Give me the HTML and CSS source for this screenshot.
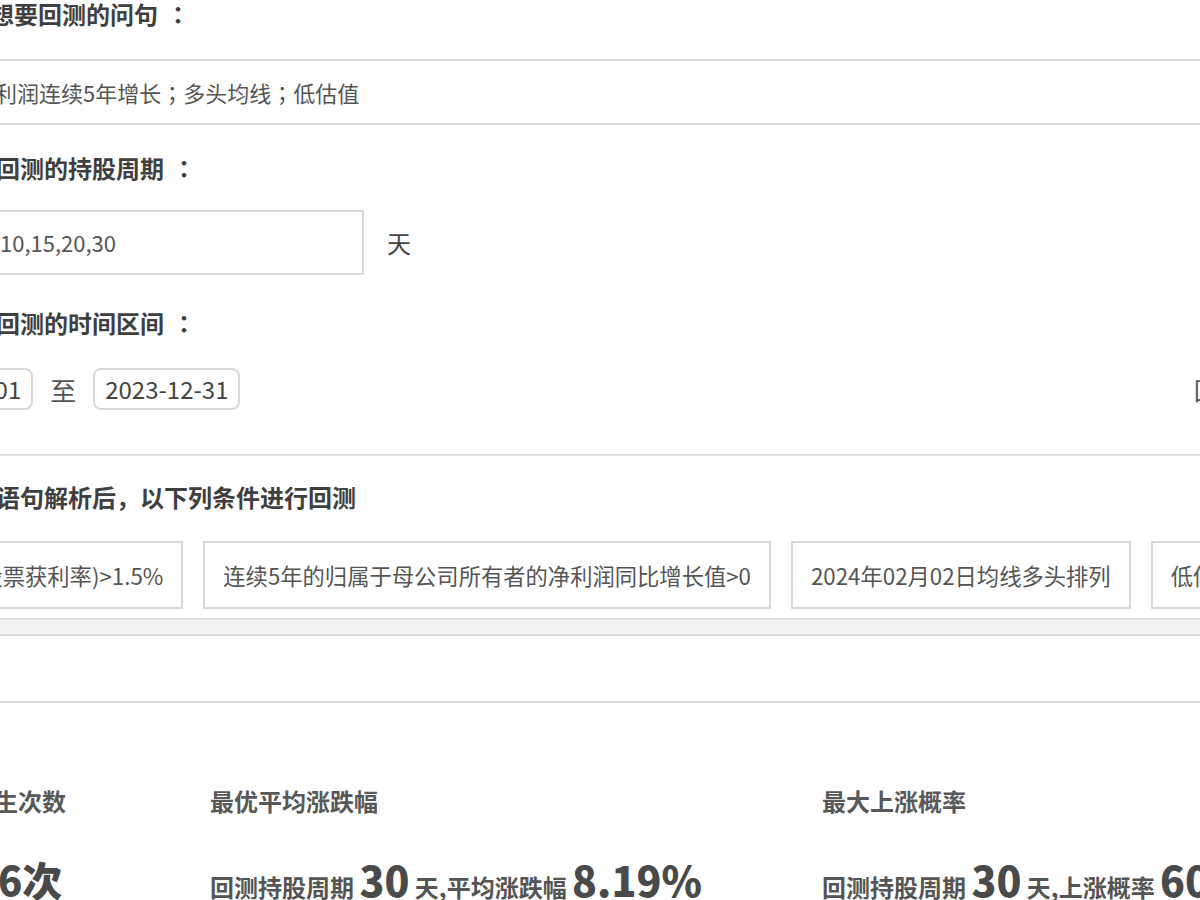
FILE: index.html
```html
<!DOCTYPE html>
<html>
	<head>
		<meta charset="UTF-8">
		<title>策略回测</title>
		<link rel="stylesheet" href="styles.css">
	</head>
	<body>
        <div class="page">
            <!-- 问句 -->
            <div class="title">输入想要回测的问句<span class="colon">：</span></div>
            <div class="query-box">净利润连续5年增长<span class="punct">；</span>多头均线<span class="punct">；</span>低估值</div>

            <!-- 持股周期 -->
            <div class="title">设置回测的持股周期<span class="colon">：</span></div>
            <div class="period-row">
                <div class="period-box">10,15,20,30</div>
                <span class="unit">天</span>
            </div>

            <!-- 时间区间 -->
            <div class="title">设置回测的时间区间<span class="colon">：</span></div>
            <div class="date-row">
                <span class="date-box">2019-01-01</span>
                <span class="date-sep">至</span>
                <span class="date-box">2023-12-31</span>
                <span class="run-btn">回测</span>
            </div>

            <div class="divider"></div>

            <!-- 解析后的条件 -->
            <div class="title">经过语句解析后<span class="punct">，</span>以下列条件进行回测</div>
            <div class="cond-wrap">
                <div class="cond-row">
                    <div class="cond">股息率(股票获利率)&gt;1.5%</div>
                    <div class="cond">连续5年的归属于母公司所有者的净利润同比增长值&gt;0</div>
                    <div class="cond">2024年02月02日均线多头排列</div>
                    <div class="cond">低估值</div>
                </div>
            </div>
            <div class="scroll-track"></div>

            <div class="divider low"></div>

            <!-- 回测结果 -->
            <div class="stats">
                <div class="stat first">
                    <div class="stat-label">发生次数</div>
                    <div class="stat-value"><b class="big">6次</b></div>
                </div>
                <div class="stat second">
                    <div class="stat-label">最优平均涨跌幅</div>
                    <div class="stat-value">回测持股周期 <b class="big">30</b> 天,平均涨跌幅 <b class="big">8.19%</b></div>
                </div>
                <div class="stat">
                    <div class="stat-label">最大上涨概率</div>
                    <div class="stat-value">回测持股周期 <b class="big">30</b> 天,上涨概率 <b class="big">60%</b></div>
                </div>
            </div>
        </div>
	</body>
</html>
```

FILE: styles.css
```css
*{
    margin: 0;
    padding: 0;
    box-sizing: border-box;
}
html,body{
    overflow: hidden;
    background: #fff;
}
body{
    font-family: "Noto Sans CJK SC", "Microsoft YaHei", sans-serif;
    color: #555;
    width: 1200px;
    height: 900px;
}
.page{
    width: 1290px;
    margin-left: -52px;
}
.title{
    font-size: 24px;
    line-height: 28px;
    font-weight: bold;
    color: #3f3f3f;
    margin-left: -6px; /* 第一行的前缀多小半个字 */
}
/* 全角标点居中，像雅黑那样 */
.colon,.punct{
    font-family: "Noto Sans CJK JP", sans-serif;
}
.colon{
    margin-left: 8px;
}
.query-box{
    margin-top: 31px;
    height: 66px;
    line-height: 62px;
    border: 2px solid #d8d8d8;
    border-right: none;
    padding-left: 23px;
    font-size: 22px;
}
.query-box + .title{
    margin-top: 29px;
    margin-left: 0;
}
.period-row{
    display: flex;
    align-items: center;
    margin-top: 28px;
}
.period-box{
    width: 416px;
    height: 65px;
    line-height: 61px;
    border: 2px solid #d8d8d8;
    border-left: none;
    padding-left: 52px;
    font-size: 22px;
}
.unit{
    margin-left: 23px;
    font-size: 24px;
    color: #444;
}
.period-row + .title{
    margin-top: 34px;
    margin-left: 0;
}
.date-row{
    display: flex;
    align-items: center;
    margin-top: 31px;
    margin-left: -62px;
}
.date-box{
    height: 42px;
    line-height: 38px;
    padding: 0 10px;
    border: 2px solid #d8d8d8;
    border-radius: 8px;
    font-size: 24px;
    color: #444;
}
.date-sep{
    margin: 0 17px;
    font-size: 26px;
    color: #555;
}
.run-btn{
    margin-left: auto;
    margin-right: -4px;
    font-size: 24px;
    color: #555;
}
.divider{
    height: 2px;
    background: #dcdcdc;
    margin-top: 44px;
}
.divider + .title{
    margin-top: 27px;
    margin-left: 0;
}
.cond-wrap{
    margin-top: 30px;
    overflow: hidden;
    padding-bottom: 9px;
}
.cond-row{
    display: flex;
    gap: 20px;
    margin-left: -62px;
}
.cond{
    flex: none;
    height: 68px;
    line-height: 64px;
    padding: 0 18px;
    border: 2px solid #d8d8d8;
    font-size: 22.3px;
    white-space: nowrap;
}
.scroll-track{
    height: 18px;
    background: #f2f2f2;
    border-top: 2px solid #dcdcdc;
    border-bottom: 2px solid #dcdcdc;
}
.divider.low{
    margin-top: 65px;
}
.stats{
    display: flex;
    margin-top: 84px;
}
.stat{
    flex: none;
}
.stat.first{
    width: 240px;
    margin-left: 22px;
}
.stat.second{
    width: 612px;
}
.stat-label{
    font-size: 24px;
    line-height: 28px;
    font-weight: bold;
    color: #585858;
}
.stat-value{
    margin-top: 40px;
    height: 48px;
    line-height: 48px;
    font-size: 24px;
    font-weight: bold;
    color: #555;
    white-space: nowrap;
}
.big{
    font-size: 41px;
    color: #4a4a4a;
}
.first .big{
    font-size: 40px;
    margin-left: 28px;
}
```
